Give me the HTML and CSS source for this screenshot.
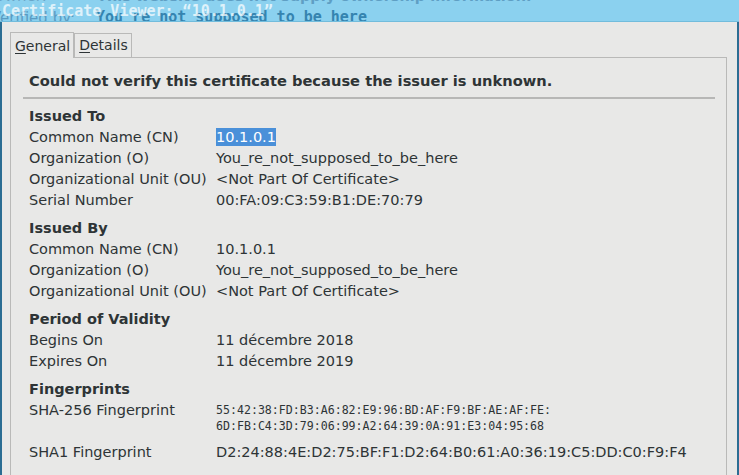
FILE: index.html
```html
<!DOCTYPE html>
<html>
<head>
<meta charset="utf-8">
<link rel="stylesheet" href="styles.css">
</head>
<body>
<div class="window">
  <div class="titlebar">
    <span class="t-owner">Owner:</span>
    <span class="t-owner-val">This website does not supply ownership information.</span>
    <span class="t-verified">Verified by:</span>
    <span class="t-verified-val">You re not supposed to be here</span>
    <span class="t-title">Certificate Viewer: “10.1.0.1”</span>
  </div>
  <div class="body">
    <div class="tabs">
      <div class="tab active"><u>G</u>eneral</div>
      <div class="tab"><u>D</u>etails</div>
    </div>
    <div class="panel">
      <div class="headline">Could not verify this certificate because the issuer is unknown.</div>
      <div class="sep"></div>

      <div class="section">
        <div class="sec-title">Issued To</div>
        <div class="row"><span class="label">Common Name (CN)</span><span class="value"><span class="sel">10.1.0.1</span></span></div>
        <div class="row"><span class="label">Organization (O)</span><span class="value">You_re_not_supposed_to_be_here</span></div>
        <div class="row"><span class="label">Organizational Unit (OU)</span><span class="value">&lt;Not Part Of Certificate&gt;</span></div>
        <div class="row"><span class="label">Serial Number</span><span class="value">00:FA:09:C3:59:B1:DE:70:79</span></div>
      </div>

      <div class="section">
        <div class="sec-title">Issued By</div>
        <div class="row"><span class="label">Common Name (CN)</span><span class="value">10.1.0.1</span></div>
        <div class="row"><span class="label">Organization (O)</span><span class="value">You_re_not_supposed_to_be_here</span></div>
        <div class="row"><span class="label">Organizational Unit (OU)</span><span class="value">&lt;Not Part Of Certificate&gt;</span></div>
      </div>

      <div class="section">
        <div class="sec-title">Period of Validity</div>
        <div class="row"><span class="label">Begins On</span><span class="value">11 décembre 2018</span></div>
        <div class="row"><span class="label">Expires On</span><span class="value">11 décembre 2019</span></div>
      </div>

      <div class="section">
        <div class="sec-title">Fingerprints</div>
        <div class="row fp"><span class="label">SHA-256 Fingerprint</span><span class="value mono">55:42:38:FD:B3:A6:82:E9:96:BD:AF:F9:BF:AE:AF:FE:<br>6D:FB:C4:3D:79:06:99:A2:64:39:0A:91:E3:04:95:68</span></div>
        <div class="row"><span class="label">SHA1 Fingerprint</span><span class="value">D2:24:88:4E:D2:75:BF:F1:D2:64:B0:61:A0:36:19:C5:DD:C0:F9:F4</span></div>
      </div>
    </div>
  </div>
</div>
</body>
</html>
```

FILE: styles.css
```css
html, body {
  margin: 0;
  padding: 0;
  width: 739px;
  height: 475px;
  overflow: hidden;
  background: #e8e8e7;
}

.window {
  width: 739px;
  height: 475px;
  display: flex;
  flex-direction: column;
  font-family: "DejaVu Sans", sans-serif;
  color: #2e3436;
}

.titlebar {
  position: relative;
  height: 21px;
  flex: none;
  background: #8bd1ef;
  border-bottom: 1px solid #72bcdc;
  overflow: hidden;
}

.titlebar span {
  position: absolute;
  white-space: nowrap;
  line-height: 1;
}

.t-owner {
  left: -7px;
  top: -11px;
  font-size: 15px;
  color: #6aa6c8;
}

.t-owner-val {
  left: 97px;
  top: -11px;
  font-size: 14.5px;
  font-weight: bold;
  color: #5f9fc4;
}

.t-verified {
  left: -9px;
  top: 11px;
  font-size: 15px;
  color: #5a9bc2;
}

.t-verified-val {
  left: 96px;
  top: 10px;
  font-family: "DejaVu Sans Mono", monospace;
  font-weight: bold;
  font-size: 15px;
  color: #3584b0;
}

.t-title {
  left: 2px;
  top: 4px;
  font-family: "DejaVu Sans Mono", monospace;
  font-weight: bold;
  font-size: 15px;
  color: rgba(255, 255, 255, 0.72);
}

.body {
  flex: 1;
  border-left: 2px solid #2b6d93;
  border-right: 2px solid #2b6d93;
  padding: 10px 10px 0 8px;
  display: flex;
  flex-direction: column;
  min-height: 0;
}

.tabs {
  display: flex;
  align-items: flex-end;
  height: 25px;
  flex: none;
}

.tab {
  font-size: 14px;
  line-height: 23px;
  padding: 0 3px 0 4px;
  border: 1px solid #b9b9b8;
  border-bottom: none;
  background: #e8e8e7;
  color: #2e3436;
}

.tab.active {
  height: 26px;
  margin-bottom: -1px;
  position: relative;
  z-index: 1;
  padding-top: 1px;
  box-sizing: border-box;
  line-height: 24px;
}

.tab u {
  text-decoration-thickness: 1px;
  text-underline-offset: 2px;
}

.panel {
  flex: 1;
  border: 1px solid #b9b9b8;
  border-bottom: none;
  padding: 12px 11px 0 12px;
  background: #e8e8e7;
  min-height: 0;
}

.headline {
  font-size: 14.667px;
  font-weight: bold;
  line-height: 21px;
  padding-left: 6px;
}

.sep {
  height: 2px;
  background: #b7b7b6;
  margin: 6px 0 7px 0;
}

.section {
  padding-left: 6px;
  margin-bottom: 7px;
}

.sec-title {
  font-size: 14.5px;
  font-weight: bold;
  line-height: 21px;
}

.row {
  display: grid;
  grid-template-columns: 187px 1fr;
  font-size: 14.5px;
  line-height: 21px;
}

.label {
  white-space: nowrap;
}

.value {
  white-space: nowrap;
}

.sel {
  background: #4a90d9;
  color: #ffffff;
  padding: 1px 0;
}

.row.fp {
  padding-bottom: 8px;
}

.mono {
  font-family: "DejaVu Sans Mono", monospace;
  font-size: 11.6px;
  line-height: 16px;
  padding-top: 2px;
}
```
